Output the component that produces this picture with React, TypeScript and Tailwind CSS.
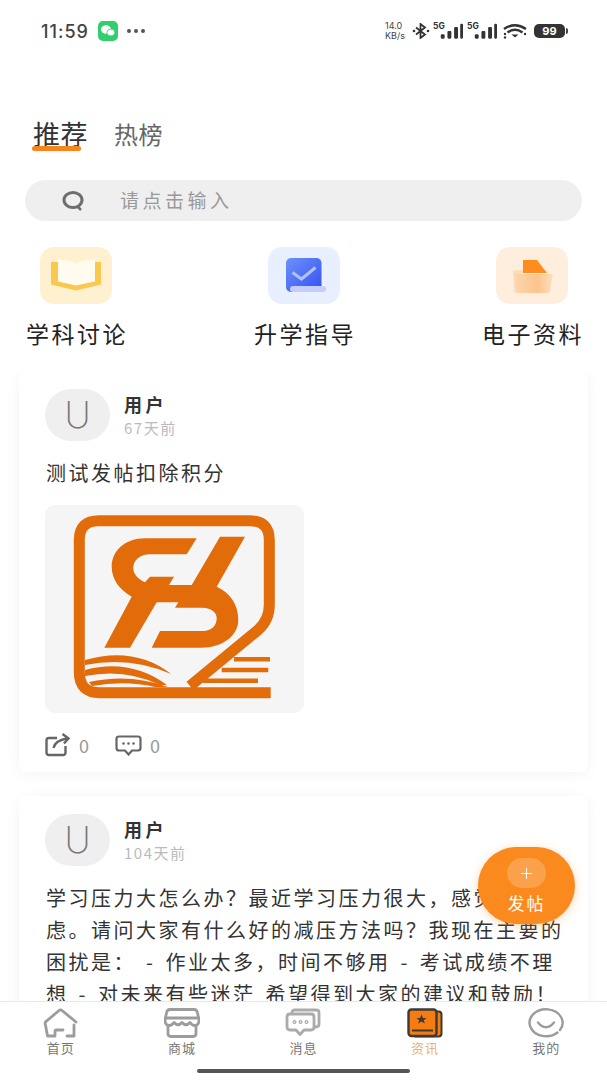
import { Plus } from "lucide-react";

const POSTS = [
  { id: 1, time: "67天前", text: "测试发帖扣除积分", image: true },
  {
    id: 2,
    time: "104天前",
    text: "学习压力大怎么办？最近学习压力很大，感觉很焦虑。请问大家有什么好的减压方法吗？我现在主要的困扰是： - 作业太多，时间不够用 - 考试成绩不理想 - 对未来有些迷茫 希望得到大家的建议和鼓励！",
    image: false,
  },
];

function StatusIcons() {
  return (
    <div className="flex items-center">
      <div className="mr-[5px] w-[22px] font-['Inter',sans-serif] text-[9px] leading-[10px] text-[#444]">
        <div>14.0</div>
        <div>KB/s</div>
      </div>
      <svg width="18" height="16" viewBox="0 0 18 16" className="mr-[3px]" fill="none">
        <path d="M4 4.500 13 11.500 8.500 15V1L13 4.500 4 11.500" stroke="#333" strokeWidth="1.800" />
        <circle cx="2" cy="8" r="1.300" fill="#333" />
        <circle cx="16" cy="8" r="1.300" fill="#333" />
      </svg>
      <Signal />
      <div className="w-[4px]" />
      <Signal />
      <svg width="27" height="15" viewBox="0 0 27 15" className="ml-[6px]" fill="none">
        <path d="M1 5Q12-2.500 23 5" stroke="#333" strokeWidth="2.400" />
        <path d="M4.500 8.500Q12 3 19.500 8.500" stroke="#333" strokeWidth="2.400" />
        <path d="M8.500 10.500H15.500L12 13.500Z" fill="#333" />
        <circle cx="2" cy="10" r="1.200" fill="#333" />
        <circle cx="2" cy="13.500" r="1.200" fill="#333" />
        <circle cx="22" cy="10" r="1.200" fill="#333" />
      </svg>
      <div className="relative ml-[4px] flex h-[14px] w-[31px] items-center justify-center rounded-[5px] bg-[#333] font-['Inter',sans-serif] text-[11px] font-bold text-white">
        99
        <div className="absolute right-[-3px] top-[4px] h-[6px] w-[2px] rounded-r-sm bg-[#444]" />
      </div>
    </div>
  );
}

function Signal() {
  return (
    <div className="relative h-[17px] w-[30px]">
      <span className="absolute left-0 top-[-1px] font-['Inter',sans-serif] text-[8.500px] font-bold leading-[9px] text-[#333]">5G</span>
      <svg width="30" height="17" viewBox="0 0 27 15" className="absolute left-0 top-0">
        <rect x="7" y="10" width="3.500" height="4" rx="1" fill="#333" />
        <rect x="13" y="7" width="3.500" height="7" rx="1" fill="#333" />
        <rect x="19" y="3.500" width="3.500" height="10.500" rx="1" fill="#333" />
        <rect x="24.500" y="0.500" width="2.500" height="13.500" rx="1" fill="#333" />
      </svg>
    </div>
  );
}

function BookIcon() {
  return (
    <svg width="72" height="57" viewBox="0 0 72 57">
      <path d="M11 15H61V37.500L36 43.500 11 37.500Z" fill="#FAC74F" />
      <path d="M18 12.500Q28 12.500 36 15.500 44 12.500 55 12.500V34.500L36 38.500 18 34.500Z" fill="#FFFBEE" />
    </svg>
  );
}

function GuideIcon() {
  return (
    <svg width="72" height="57" viewBox="0 0 72 57" fill="none">
      <defs>
        <linearGradient id="guide" x1="0" y1="0" x2="1" y2="1">
          <stop offset="0" stopColor="#6C92FA" />
          <stop offset="1" stopColor="#3550F0" />
        </linearGradient>
      </defs>
      <rect x="18" y="11" width="35.500" height="34" rx="5" fill="url(#guide)" />
      <path d="M24.500 25.500 33.500 32 47.500 20.500" stroke="#AFC2FC" strokeWidth="3" />
      <rect x="22" y="39" width="36" height="6" rx="3" fill="#C5CEFB" />
    </svg>
  );
}

function FolderIcon() {
  return (
    <svg width="72" height="57" viewBox="0 0 72 57">
      <defs>
        <linearGradient id="folder" x1="0" y1="0" x2="1" y2="0">
          <stop offset="0" stopColor="#FCD6AC" />
          <stop offset="0.600" stopColor="#FDC48C" />
          <stop offset="1" stopColor="#FCE0C2" />
        </linearGradient>
      </defs>
      <path d="M17 24Q18 23 27 23V27H51V31L49 44.500Q49 46 47 46H21Q18 46 18 44Z" fill="#FBDDBC" />
      <path d="M27 13H41L51 26H27Z" fill="#FF8C1F" />
      <path d="M19 27H57L54 44Q53.500 46 51 46H23Q20 46 20 43Z" fill="url(#folder)" />
    </svg>
  );
}

const SHORTCUTS = [
  { label: "学科讨论", bg: "bg-[#FFF0CF]", icon: <BookIcon /> },
  { label: "升学指导", bg: "bg-[#E8F0FF]", icon: <GuideIcon /> },
  { label: "电子资料", bg: "bg-[#FFEEDD]", icon: <FolderIcon /> },
];

// brand mark, page coords of the image box are kept in the viewBox
function Logo() {
  return (
    <svg viewBox="45 505 259 208" className="block h-[208px] w-[259px]" fill="none">
      <path
        d="M270.700 692.700H100Q79.300 692.700 79.300 672V540Q79.300 520.700 99 520.700H250Q269.300 520.700 269.300 540V605Q269.300 620 258 630L190 686"
        stroke="#E36C0A"
        strokeWidth="11"
      />
      <path
        d="M196.700 538.300H145C125 538.300 111.700 551 111.700 566.700C111.700 580 120 590 131.700 596.700L104.300 647.700H130L156.700 602.300H178.300L175 607.700H201.700C211 607.700 216.700 612 216.700 618.300C216.700 626 211 631 203.300 631H160L151.700 647.700H201.700C222 647.700 238.300 636 238.300 620C238.300 604 230 593 216.700 586.700L245 536.700H220L191.700 585H169L174 576.700H150L145 582.300C138 579 133.300 574 133.300 568.300C133.300 560 140 554.300 150 554.300H186.700Z"
        fill="#E36C0A"
      />
      <path d="M85 660Q135 646 171 674Q130 656 85 665Z" fill="#E36C0A" />
      <path d="M85 670Q130 658 167 685H160Q125 668 85 676Z" fill="#E36C0A" />
      <path d="M89 682Q130 673 168 687H155Q125 680 92 686Z" fill="#E36C0A" />
      <path d="M234 659.300H270M221.700 670H268.300M203 680.700H258" stroke="#E36C0A" strokeWidth="4.500" />
    </svg>
  );
}

function Post({ time, text, image }: { time: string; text: string; image: boolean }) {
  return (
    <div className="mx-[19px] mb-[24px] shrink-0 rounded-[8px] bg-white pb-[14px] pl-[26px] pr-[26px] pt-[18px] shadow-[0_2px_14px_rgba(0,0,0,0.05)]">
      <div className="flex items-center">
        <div className="flex h-[52px] w-[65px] items-center justify-center rounded-full bg-[#EFEFEF] font-['Inter',sans-serif] text-[36px] font-extralight text-[#777]">
          U
        </div>
        <div className="ml-[14px] pt-[1px]">
          <div className="text-[18px] font-bold leading-[22px] tracking-[3.500px] text-[#333]">用户</div>
          <div className="mt-[3px] text-[15px] leading-[20px] tracking-[1.500px] text-[#bbb]">{time}</div>
        </div>
      </div>
      <p className="-mr-[7px] ml-[1px] mt-[16px] text-[20px] leading-[32px] tracking-[2.500px] text-[#333] [word-spacing:3px]">{text}</p>
      {image && (
        <>
          <div className="mt-[16px] w-[259px] overflow-hidden rounded-[10px] bg-[#F5F5F5]">
            <Logo />
          </div>
          <div className="mt-[19px] flex h-[26px] items-center text-[18px] text-[#999]">
            <svg width="26" height="24" viewBox="0 0 26 24" fill="none" stroke="#666" strokeWidth="2.400">
              <path d="M12 5H4Q1.500 5 1.500 7.500V19.500Q1.500 22 4 22H18Q20.500 22 20.500 19.500V13" />
              <path d="M8.500 15Q10 7.500 22 5.500M17.500 1 23.500 5.500 19 10.500" />
            </svg>
            <span className="ml-[8px]">0</span>
            <svg width="27" height="21" viewBox="0 0 27 21" fill="none" className="ml-[26px]">
              <path d="M4 1.500H23Q25.500 1.500 25.500 4V13Q25.500 15.500 23 15.500H17L13.500 19.500 10 15.500H4Q1.500 15.500 1.500 13V4Q1.500 1.500 4 1.500Z" stroke="#666" strokeWidth="2.200" />
              <circle cx="8.500" cy="8.500" r="1.300" fill="#666" />
              <circle cx="13.500" cy="8.500" r="1.300" fill="#666" />
              <circle cx="18.500" cy="8.500" r="1.300" fill="#666" />
            </svg>
            <span className="ml-[8px]">0</span>
          </div>
        </>
      )}
    </div>
  );
}

const NAV_STROKE = { fill: "none", stroke: "#9C9C9C", strokeWidth: 2.800, strokeLinejoin: "round", strokeLinecap: "round" } as const;

function NavIcon({ name }: { name: string }) {
  if (name === "home")
    return (
      <svg width="36" height="30" viewBox="0 0 36 30" {...NAV_STROKE}>
        <path d="M3 13.500 16 2.500Q17.500 1.200 19 2.500L33 14" />
        <path d="M3 13.500Q1.500 15 2.500 17L4.500 28H12V23.500Q12 22 13.500 22H20" />
        <path d="M31 17V28H24" />
      </svg>
    );
  if (name === "shop")
    return (
      <svg width="36" height="30" viewBox="0 0 36 30" {...NAV_STROKE}>
        <path d="M6 1.500H30Q33 1.500 33.500 5L35 12Q35 17 31 17.500Q28 17.500 26 14.500Q22 19 18 14.500Q14 19 10 14.500Q8 17.500 5 17.500Q1 17 1 12L2.500 5Q3 1.500 6 1.500Z" />
        <path d="M1.500 10H34.500" />
        <path d="M4 18V25.500Q4 28.500 7 28.500H29Q32 28.500 32 25.500V18" />
      </svg>
    );
  if (name === "message")
    return (
      <svg width="36" height="30" viewBox="0 0 36 30" {...NAV_STROKE} stroke="#ABABAB">
        <path d="M7 5V4.500Q7 2 10 2H31Q34 2 34 4.500V16Q34 19 31 19H29" />
        <path d="M5 6H26Q29 6 29 9V19Q29 22 26 22H19L15 26.500 11 22H5Q2 22 2 19V9Q2 6 5 6Z" fill="#fff" />
        <circle cx="9.500" cy="14" r="0.600" />
        <circle cx="15.500" cy="14" r="0.600" />
        <circle cx="21.500" cy="14" r="0.600" />
      </svg>
    );
  if (name === "news")
    return (
      <svg width="36" height="30" viewBox="0 0 36 30">
        <rect x="6" y="3.500" width="28.500" height="25" rx="3" fill="#F47C11" stroke="#3D3A36" strokeWidth="2" />
        <rect x="1.500" y="1.500" width="28" height="26.500" rx="3" fill="#F47C11" stroke="#3D3A36" strokeWidth="2.400" />
        <path d="M14.500 6.500 16 10H19.500L16.800 12.200 17.800 15.500 14.500 13.500 11.200 15.500 12.200 12.200 9.500 10H13Z" fill="#3D3A36" />
        <path d="M5 22.500H26" stroke="#3D3A36" strokeWidth="2" />
      </svg>
    );
  return (
    <svg width="36" height="30" viewBox="0 0 36 30" {...NAV_STROKE} strokeWidth={2.400}>
      <path d="M29.500 24.500A16.500 13.500 0 1 1 32 22" />
      <path d="M10 14.500Q18 24 26 14.500" />
    </svg>
  );
}

const NAV = [
  { name: "home", label: "首页" },
  { name: "shop", label: "商城" },
  { name: "message", label: "消息" },
  { name: "news", label: "资讯", active: true },
  { name: "me", label: "我的" },
];

export default function App() {
  return (
    <div className="relative flex h-[1080px] w-[607px] flex-col overflow-hidden bg-white font-['Noto_Sans_CJK_SC',sans-serif]">
      {/* Status bar */}
      <div className="flex h-[62px] shrink-0 items-center justify-between pl-[41px] pr-[42px]">
        <div className="flex items-center">
          <span className="font-['Inter',sans-serif] text-[18px] font-medium tracking-[1px] text-[#444]">11:59</span>
          <svg width="20" height="20" viewBox="0 0 20 20" className="ml-[9px]">
            <rect width="20" height="20" rx="5" fill="#2FCF6B" />
            <ellipse cx="8" cy="8.500" rx="5" ry="4.200" fill="#fff" />
            <ellipse cx="12.800" cy="11.500" rx="4" ry="3.400" fill="#fff" stroke="#2FCF6B" strokeWidth="0.800" />
          </svg>
          <div className="ml-[9px] flex gap-[3px]">
            <div className="h-[4px] w-[4px] rounded-full bg-[#555]" />
            <div className="h-[4px] w-[4px] rounded-full bg-[#555]" />
            <div className="h-[4px] w-[4px] rounded-full bg-[#555]" />
          </div>
        </div>
        <StatusIcons />
      </div>

      {/* Tabs */}
      <div className="ml-[33px] mt-[53px] flex h-[38px] shrink-0 items-center">
        <div className="relative text-[27px] leading-[38px] tracking-[0.500px] text-[#333]">
          推荐
          <div className="absolute bottom-[2px] left-[-1px] h-[5px] w-[49px] rounded-full bg-[#F8851C]" />
        </div>
        <div className="ml-[26px] text-[24px] tracking-[0.500px] text-[#666]">热榜</div>
      </div>

      {/* Search */}
      <div className="mx-[25px] mt-[27px] flex h-[41px] shrink-0 items-center rounded-full bg-[#EFEFEF] pl-[36px]">
        <svg width="24" height="24" viewBox="0 0 24 24" fill="none" stroke="#6E6E6E">
          <ellipse cx="12" cy="11" rx="9" ry="7.500" strokeWidth="3" />
          <path d="M17 18 20 21" strokeWidth="2.500" />
        </svg>
        <span className="ml-[35px] text-[19px] tracking-[3.500px] text-[#999]">请点击输入</span>
      </div>

      {/* Shortcuts */}
      <div className="mt-[26px] flex shrink-0 justify-between pl-[26px] pr-[25px]">
        {SHORTCUTS.map((s) => (
          <div key={s.label} className="flex w-[100px] flex-col items-center">
            <div className={`h-[57px] w-[72px] overflow-hidden rounded-[14px] ${s.bg}`}>{s.icon}</div>
            <div className="ml-[2px] mt-[13px] whitespace-nowrap text-[23px] leading-[32px] tracking-[2.500px] text-[#222]">{s.label}</div>
          </div>
        ))}
      </div>

      {/* Feed */}
      <div className="mt-[22px] flex min-h-0 flex-1 flex-col overflow-hidden">
        {POSTS.map((p) => (
          <Post key={p.id} time={p.time} text={p.text} image={p.image} />
        ))}
      </div>

      {/* Bottom nav */}
      <div className="relative h-[79px] shrink-0 border-t border-[#E8E8E8] bg-white">
        <div className="grid grid-cols-5 pt-[6px]">
          {NAV.map((n) => (
            <div key={n.name} className="flex flex-col items-center">
              <NavIcon name={n.name} />
              <div className={`mt-[1px] text-[13px] leading-[18px] tracking-[1px] ${n.active ? "text-[#E8B36F]" : "text-[#777]"}`}>{n.label}</div>
            </div>
          ))}
        </div>
        <div className="absolute bottom-[7px] left-[197px] h-[4px] w-[213px] rounded-full bg-[#555]" />
      </div>

      {/* Floating post button */}
      <div className="absolute left-[478px] top-[847px] flex h-[77px] w-[97px] flex-col items-center rounded-full bg-[#FB8A1E] pt-[11px] shadow-[0_2px_10px_rgba(251,138,30,0.35)]">
        <div className="flex h-[30px] w-[39px] items-center justify-center rounded-full bg-white/20">
          <Plus size={17} color="#fff" strokeWidth={1.500} />
        </div>
        <div className="mt-[3px] text-[17px] leading-[24px] tracking-[2px] text-white">发帖</div>
      </div>
    </div>
  );
}
